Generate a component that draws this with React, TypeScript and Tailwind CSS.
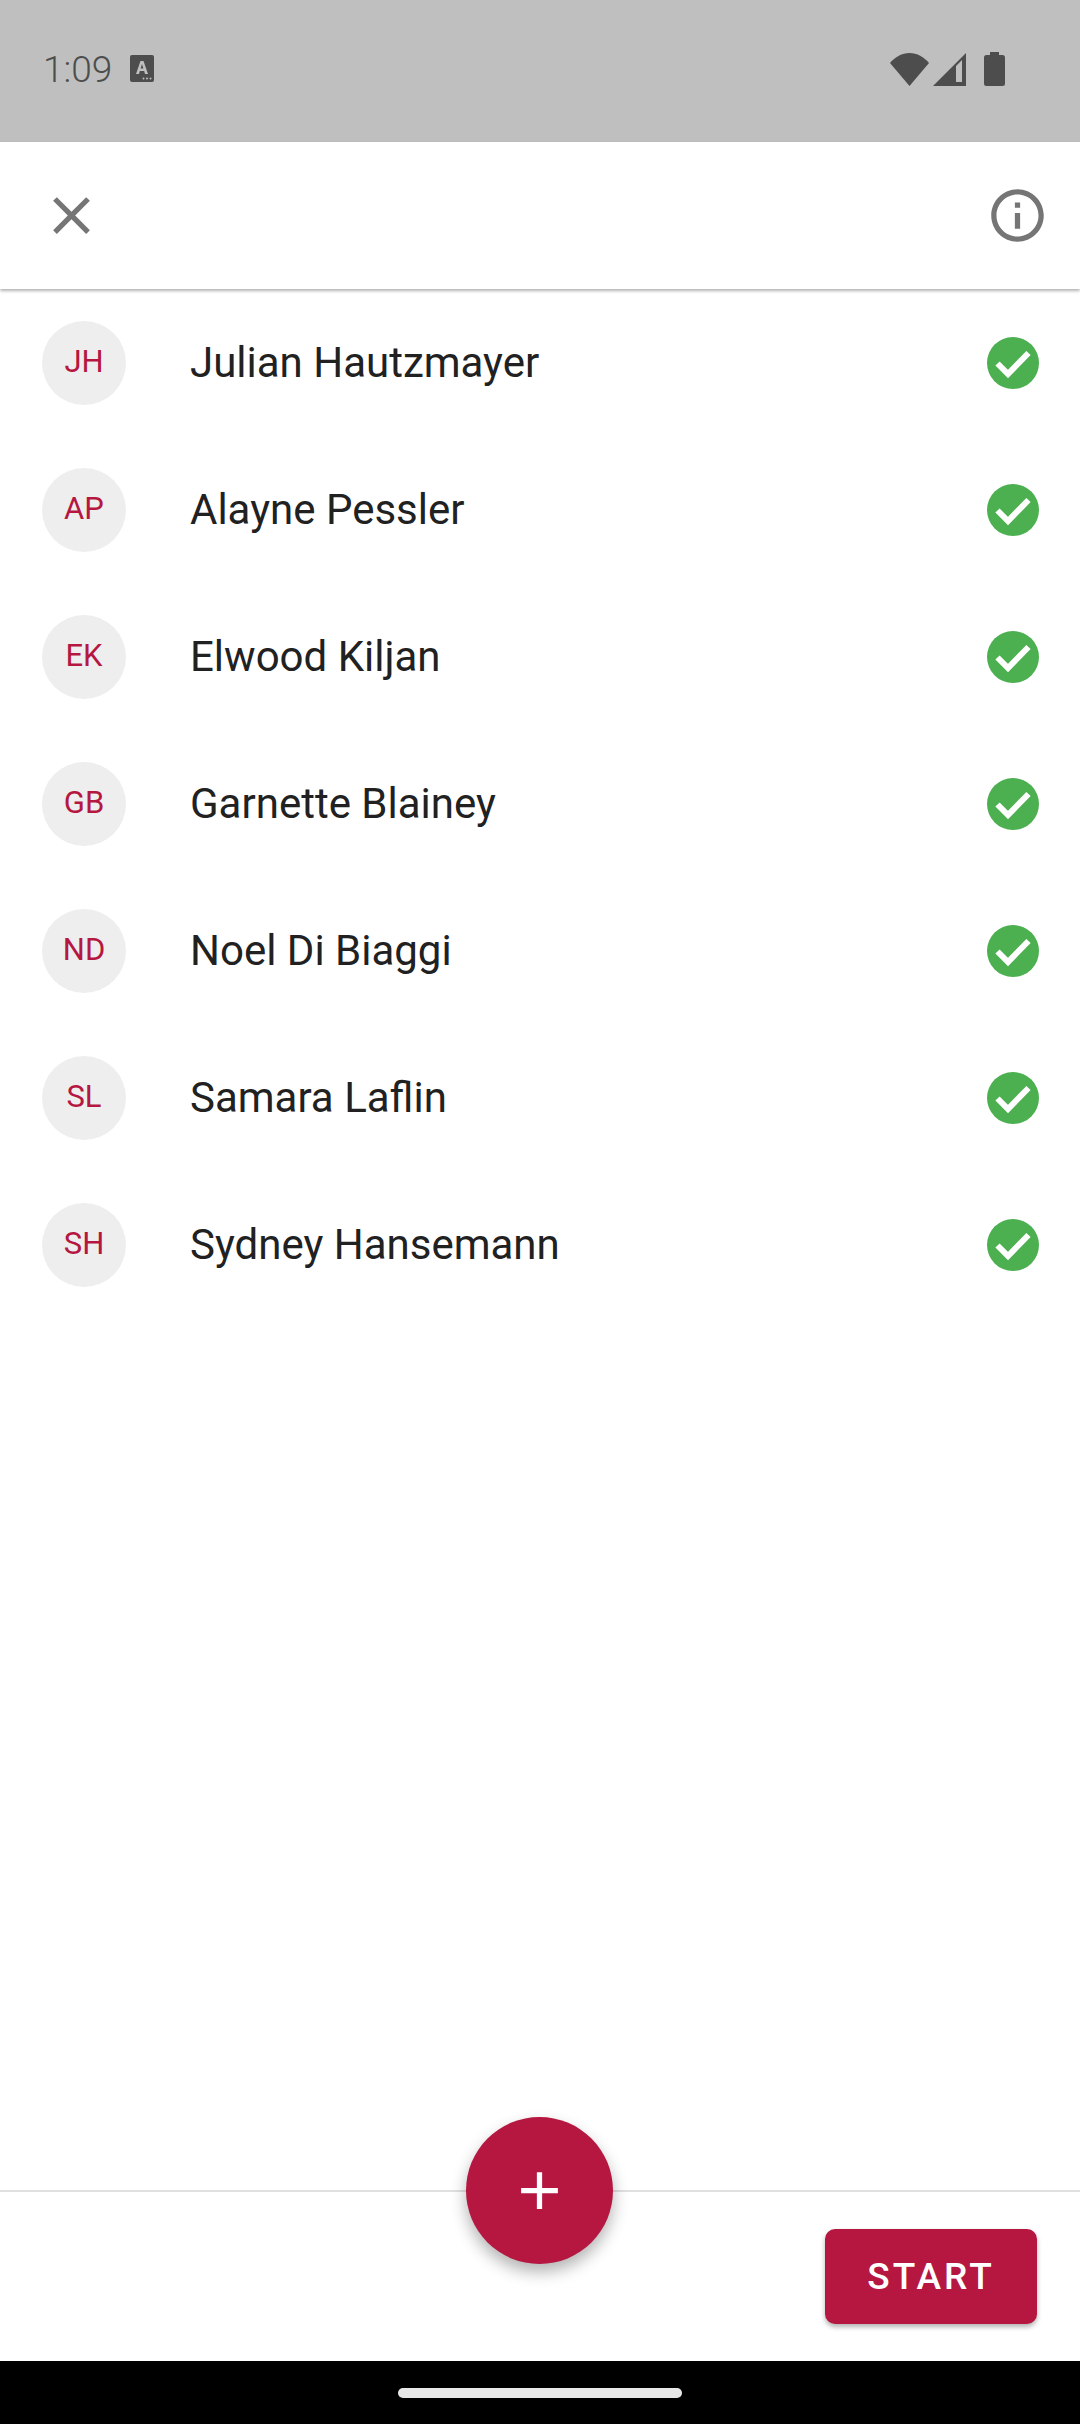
const people = [
  { initials: 'JH', name: 'Julian Hautzmayer' },
  { initials: 'AP', name: 'Alayne Pessler' },
  { initials: 'EK', name: 'Elwood Kiljan' },
  { initials: 'GB', name: 'Garnette Blainey' },
  { initials: 'ND', name: 'Noel Di Biaggi' },
  { initials: 'SL', name: 'Samara Laflin' },
  { initials: 'SH', name: 'Sydney Hansemann' },
];

function StatusBar() {
  return (
    <div className="flex h-[142px] shrink-0 items-center bg-[#bfbfbf] pb-[4px] text-[#4d4d4d]">
      <span className="ml-[43px] text-[37px] font-light leading-none">1:09</span>
      <svg className="ml-[18px]" width="24" height="28" viewBox="0 0 24 28">
        <rect width="24" height="27" rx="2" fill="#4d4d4d" />
        <path d="M6 19 L10.5 6 h3 L18 19 h-3 l-.8-3 h-4.4 l-.8 3z M10.6 13.5 h2.8 L12 9z" fill="#bfbfbf" fillRule="evenodd" />
        <circle cx="13.5" cy="23.5" r="1" fill="#bfbfbf" />
        <circle cx="17" cy="23.5" r="1" fill="#bfbfbf" />
        <circle cx="20.5" cy="23.5" r="1" fill="#bfbfbf" />
      </svg>
      <div className="ml-auto mr-[75px] flex items-center">
        <svg width="39" height="33" viewBox="0 0 39 33">
          <path d="M0 10 C5 4 12 0 19.5 0 C27 0 34 4 39 10 L19.5 33z" fill="#4d4d4d" />
        </svg>
        <svg className="ml-[4px]" width="33" height="33" viewBox="0 0 33 33">
          <path fillRule="evenodd" d="M0 33 L33 0 V33z M23 13 V29 H29 V7z" fill="#4d4d4d" />
        </svg>
        <svg className="ml-[18px]" width="21" height="34" viewBox="0 0 21 34">
          <path d="M6 0 h9 v3 h3.5 a2.5 2.5 0 0 1 2.500 2.500 V31.500 a2.500 2.500 0 0 1-2.500 2.500 H2.500 A2.500 2.500 0 0 1 0 31.500 V5.500 A2.500 2.500 0 0 1 2.500 3 H6z" fill="#4d4d4d" />
        </svg>
      </div>
    </div>
  );
}

function Toolbar() {
  return (
    <div className="relative z-10 flex h-[147px] shrink-0 items-center justify-between bg-white pl-[40px] pr-[31px] shadow-[0_2px_3px_rgba(0,0,0,0.3)]">
      <svg width="63" height="63" viewBox="0 0 24 24" fill="#757575">
        <path d="M19 6.410 17.590 5 12 10.590 6.410 5 5 6.410 10.590 12 5 17.590 6.410 19 12 13.410 17.590 19 19 17.590 13.410 12z" />
      </svg>
      <svg width="63" height="63" viewBox="0 0 24 24" fill="#757575">
        <path d="M11 7h2v2h-2zm0 4h2v6h-2zm1-9C6.480 2 2 6.480 2 12s4.480 10 10 10 10-4.480 10-10S17.520 2 12 2zm0 18c-4.410 0-8-3.590-8-8s3.590-8 8-8 8 3.590 8 8-3.590 8-8 8z" />
      </svg>
    </div>
  );
}

function PersonRow({ initials, name }: { initials: string; name: string }) {
  return (
    <div className="flex h-[147px] items-center pl-[42px] pr-[41px]">
      <div className="flex h-[84px] w-[84px] items-center justify-center rounded-full bg-[#eeeeee] text-[31px] text-[#b51741]">
        {initials}
      </div>
      <span className="ml-[64px] text-[42px] text-[#212121]">{name}</span>
      <svg className="ml-auto" width="52" height="52" viewBox="0 0 52 52">
        <circle cx="26" cy="26" r="26" fill="#4caf50" />
        <path d="M10.500 26.500 L21 37 L41.500 16" fill="none" stroke="#ffffff" strokeWidth="6" />
      </svg>
    </div>
  );
}

export default function App() {
  return (
    <div className="relative flex h-[2424px] w-[1080px] flex-col overflow-hidden bg-white font-['Roboto',sans-serif]">
      <StatusBar />
      <Toolbar />
      <div className="flex-1">
        {people.map((p) => (
          <PersonRow key={p.initials + p.name} initials={p.initials} name={p.name} />
        ))}
      </div>
      <div className="flex h-[171px] shrink-0 justify-end border-t-2 border-[#e0e0e0] pr-[43px] pt-[37px]">
        <button
          type="button"
          className="h-[95px] w-[212px] rounded-[10px] bg-[#b51741] text-[37px] font-medium tracking-[3px] text-white shadow-[0_3px_5px_rgba(0,0,0,0.3)]"
        >
          START
        </button>
      </div>
      <div className="flex h-[63px] shrink-0 items-start justify-center bg-black pt-[27px]">
        <div className="h-[10px] w-[284px] rounded-full bg-[#e8e8e8]" />
      </div>
      <button
        type="button"
        className="absolute left-[466px] top-[2117px] flex h-[147px] w-[147px] items-center justify-center rounded-full bg-[#b51741] shadow-[0_8px_16px_rgba(0,0,0,0.3)]"
      >
        <svg width="63" height="63" viewBox="0 0 24 24" fill="#ffffff">
          <path d="M19 13h-6v6h-2v-6H5v-2h6V5h2v6h6z" />
        </svg>
      </button>
    </div>
  );
}
